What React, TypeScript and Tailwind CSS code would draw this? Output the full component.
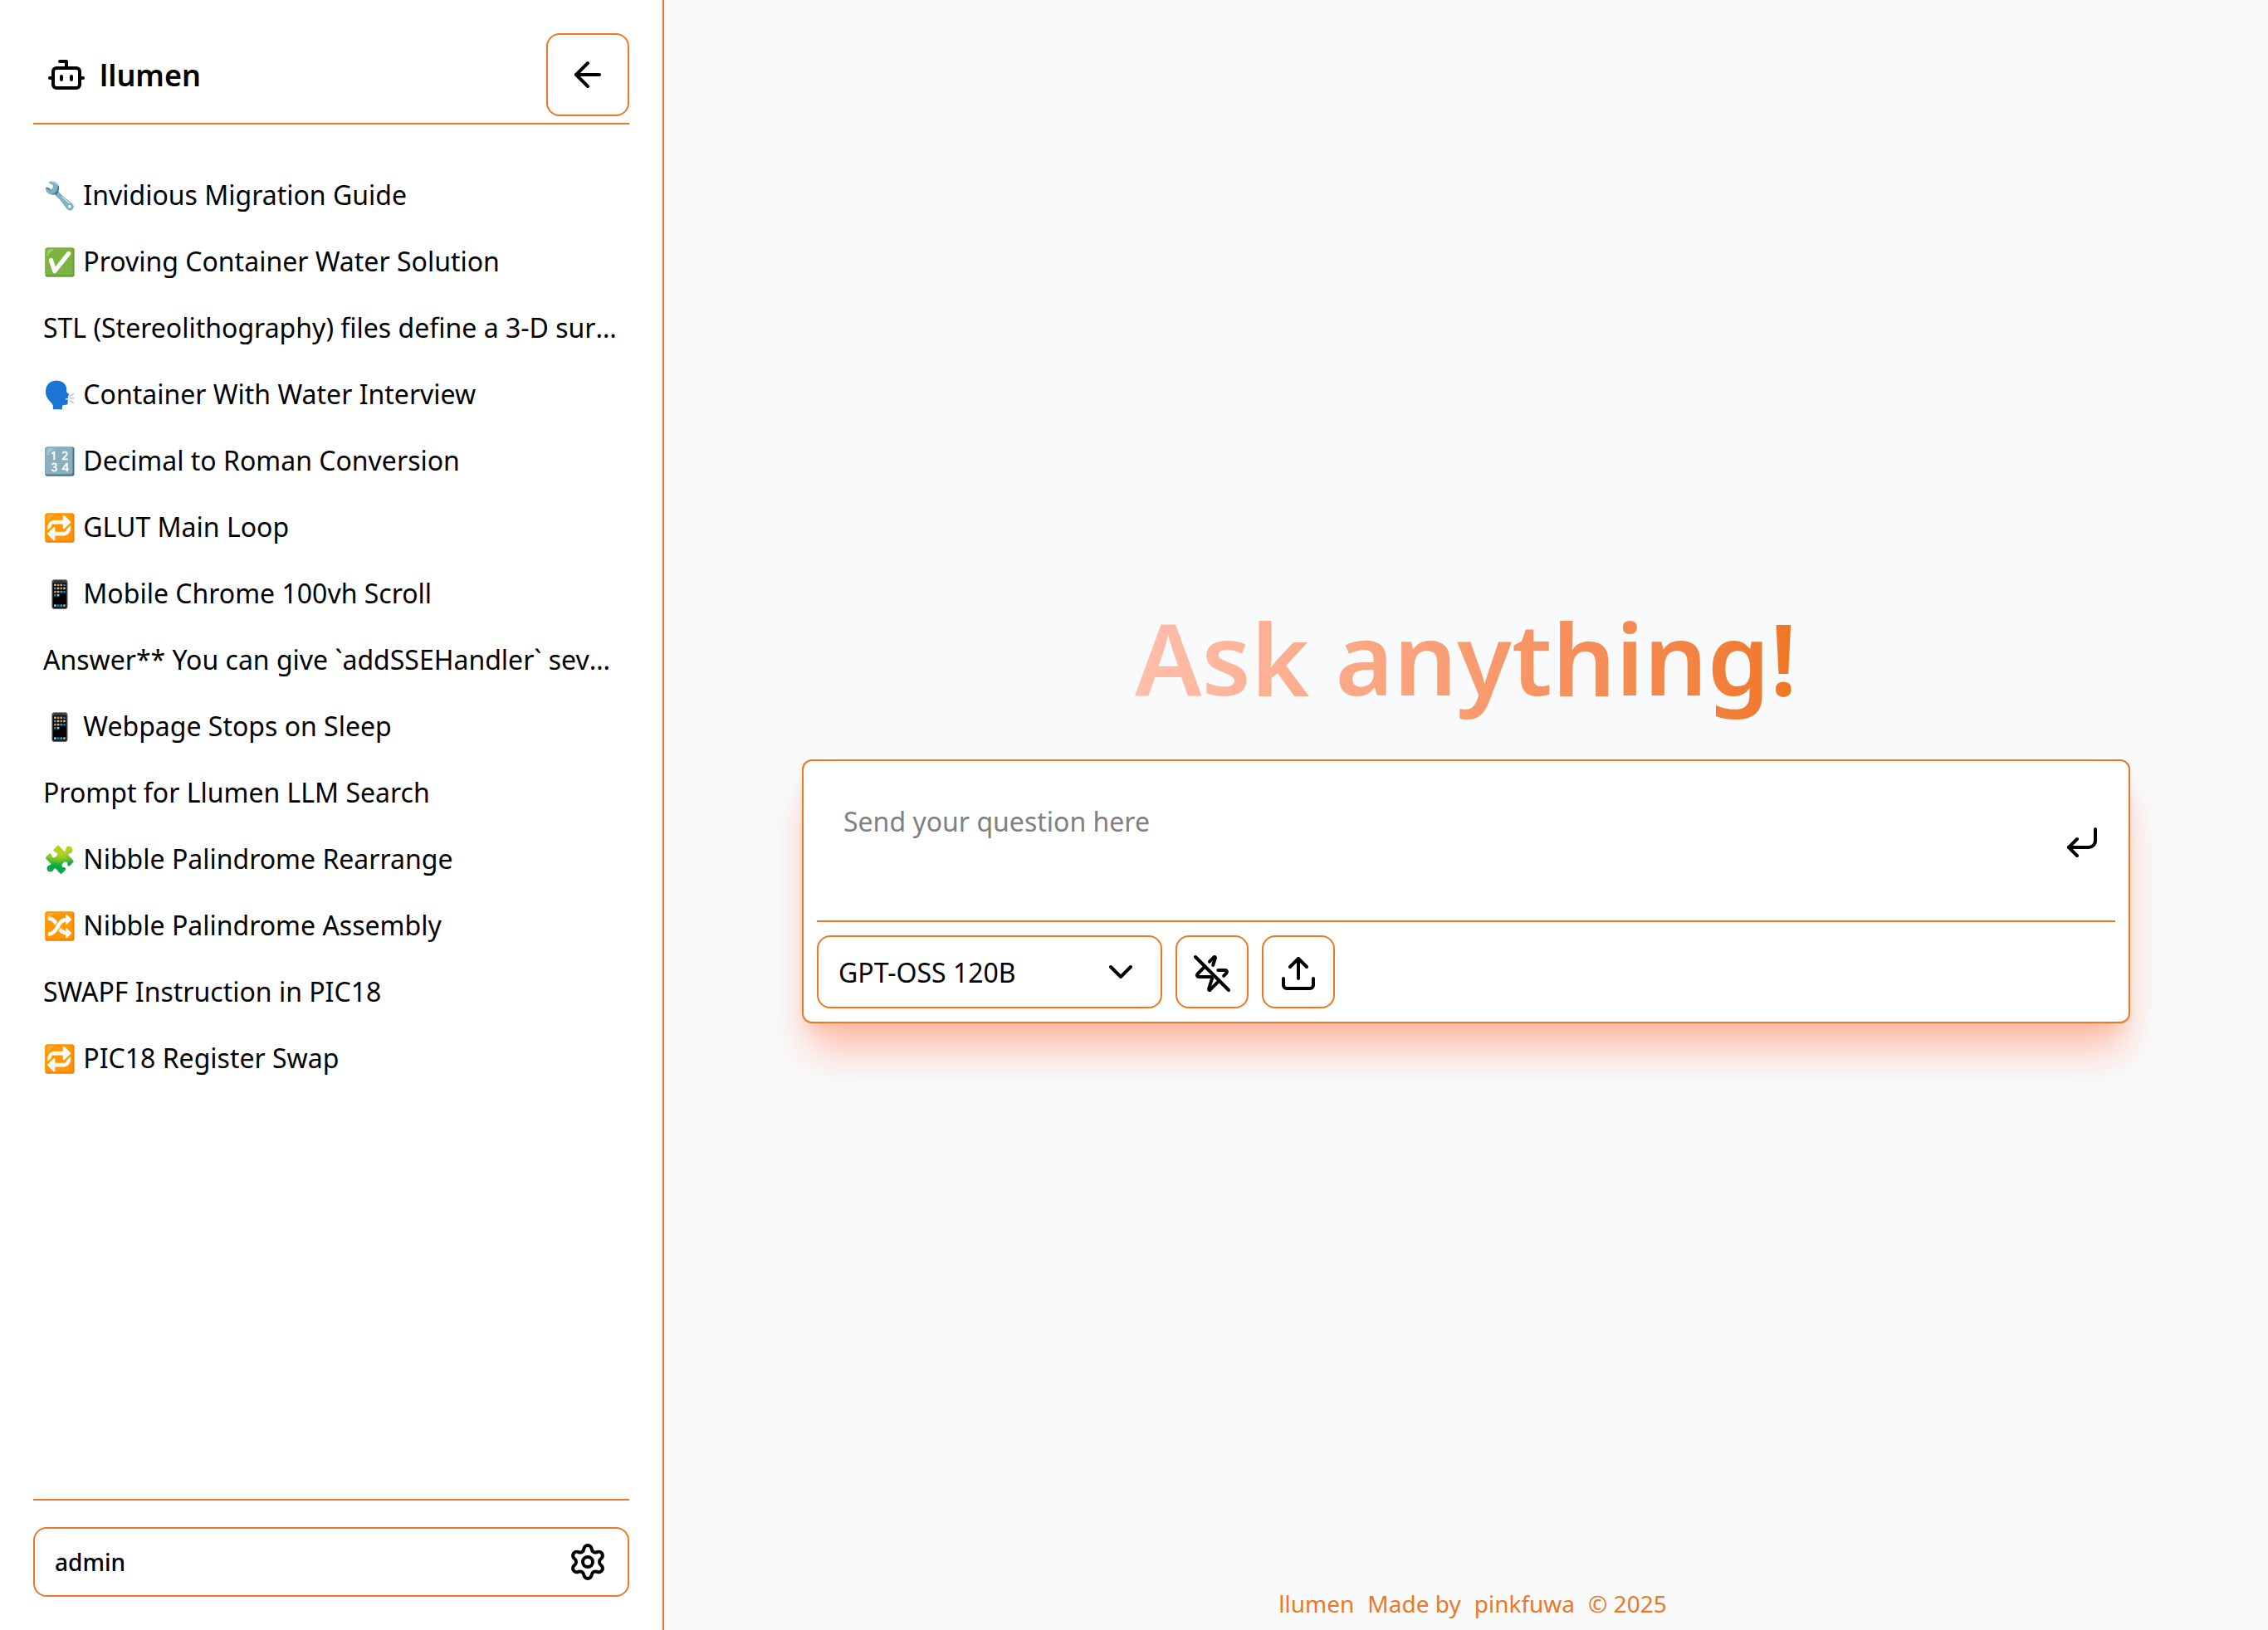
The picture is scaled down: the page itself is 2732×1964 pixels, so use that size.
import { ArrowLeft, Bot, ChevronDown, CornerDownLeft, Settings, Upload, ZapOff } from "lucide-react";

const chats = [
  { title: "🔧 Invidious Migration Guide" },
  { title: "✅ Proving Container Water Solution" },
  { title: "STL (Stereolithography) files define a 3-D sur", clipped: true },
  { title: "🗣️ Container With Water Interview" },
  { title: "🔢 Decimal to Roman Conversion" },
  { title: "🔁 GLUT Main Loop" },
  { title: "📱 Mobile Chrome 100vh Scroll" },
  { title: "Answer** You can give `addSSEHandler` sev", clipped: true },
  { title: "📱 Webpage Stops on Sleep" },
  { title: "Prompt for Llumen LLM Search" },
  { title: "🧩 Nibble Palindrome Rearrange" },
  { title: "🔀 Nibble Palindrome Assembly" },
  { title: "SWAPF Instruction in PIC18" },
  { title: "🔁 PIC18 Register Swap" },
];

function Sidebar() {
  return (
    <aside className="flex h-full w-[800px] shrink-0 flex-col border-r-2 border-[#ef7722] bg-white px-10 py-10">
      <header className="flex h-[110px] shrink-0 items-start justify-between border-b-2 border-[#ef7722]">
        <a className="flex h-[100px] items-center pl-4">
          <Bot size={48} />
          <span className="ml-4 pt-0.5 text-[36px] leading-none font-semibold">llumen</span>
        </a>
        <button className="flex h-[100px] w-[100px] items-center justify-center rounded-2xl border-2 border-[#ef7722]">
          <ArrowLeft size={48} />
        </button>
      </header>
      <ul className="mt-[45px] flex grow flex-col">
        {chats.map(({ title, clipped }) => (
          <li key={title} className="h-20 pl-3 text-[32px] leading-[80px] whitespace-nowrap">
            {title}
            {clipped && <span className="inline-block">…</span>}
          </li>
        ))}
      </ul>
      <div className="border-t-2 border-[#ef7722] pt-8">
        <button className="flex h-[84px] w-full items-center justify-between rounded-2xl border-2 border-[#ef7722] px-6 text-[28px] font-medium">
          admin
          <Settings size={48} />
        </button>
      </div>
    </aside>
  );
}

function Composer() {
  return (
    <section className="flex h-[318px] w-[1600px] flex-col rounded-xl border-2 border-[#ef7722] bg-white p-4 shadow-[0_40px_50px_-10px_#ffbaa4,0_16px_20px_-12px_#ffbaa4]">
      <div className="flex h-[178px] shrink-0 items-start border-b-2 border-[#ef7722] pr-4">
        <p className="grow pt-[33px] pl-8 text-[32px] leading-[48px] text-[#808080]">Send your question here</p>
        <CornerDownLeft size={48} className="mt-[58px]" />
      </div>
      <div className="mt-4 flex gap-4">
        <button className="flex h-[88px] w-[416px] items-center justify-between rounded-2xl border-2 border-[#ef7722] px-6 text-[32px]">
          <span className="pt-0.5">GPT-OSS 120B</span>
          <ChevronDown size={48} />
        </button>
        <button className="flex h-[88px] w-[88px] items-center justify-center rounded-2xl border-2 border-[#ef7722] pt-1">
          <ZapOff size={48} />
        </button>
        <button className="flex h-[88px] w-[88px] items-center justify-center rounded-2xl border-2 border-[#ef7722] pt-1">
          <Upload size={48} />
        </button>
      </div>
    </section>
  );
}

export default function App() {
  return (
    <div className="flex h-[1964px] w-[2732px] overflow-hidden bg-[#f9fafc] font-['Noto_Sans',sans-serif] text-black">
      <Sidebar />
      <main className="flex grow flex-col items-center">
        <h1 className="mt-[712px] bg-linear-to-r from-[#ffbeac] to-[#ef7722] bg-clip-text text-[120px] leading-[160px] font-semibold text-transparent">
          Ask anything!
        </h1>
        <div className="mt-[43px]">
          <Composer />
        </div>
        <footer className="mt-auto mb-3 flex gap-4 pl-4 text-[28px] leading-[40px] text-[#ef7722]">
          <a>llumen</a>
          <span>Made by</span>
          <a>pinkfuwa</a>
          <span>© 2025</span>
        </footer>
      </main>
    </div>
  );
}
